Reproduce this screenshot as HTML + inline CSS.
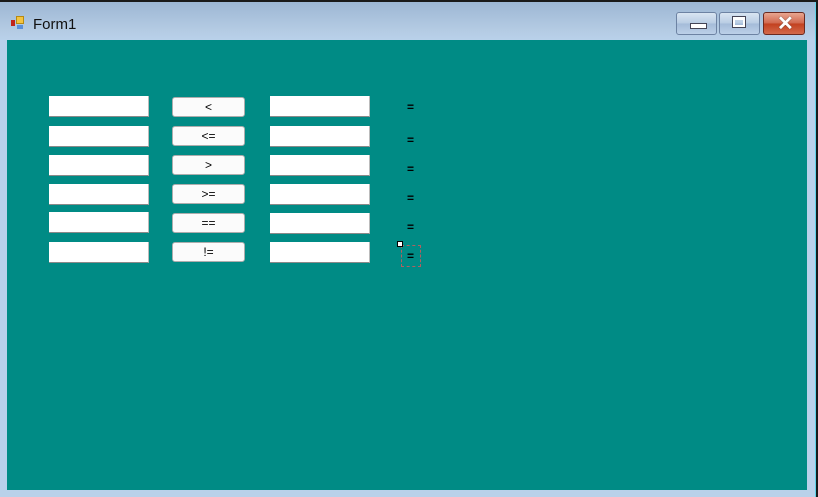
<!DOCTYPE html>
<html><head><style>
body{margin:0;width:818px;height:497px;overflow:hidden;background:#1a1a1a;font-family:"Liberation Sans",sans-serif}
#win{position:absolute;left:0;top:2px;width:815px;height:495px;background:linear-gradient(#9db7d4 0,#b4cbe3 28px,#b9d1ea 38px);border-right:1px solid #5fd3e8}
#client{position:absolute;left:7px;top:38px;width:800px;height:450px;background:#008b85}
.tb{position:absolute;width:100px;height:21px;background:#fff;border-bottom:1px solid #8a8a8a;border-right:1px solid #bbb;box-sizing:border-box}
.bt{position:absolute;left:172px;width:73px;height:20px;background:#fbfbfb;border:1px solid #adadad;border-radius:3px;box-sizing:border-box;font-size:12px;text-align:center;line-height:18px;color:#000}
.lb{position:absolute;left:407px;font-size:12px;font-weight:bold}
.cb{position:absolute;top:10px;height:23px;border:1px solid #6d83a3;border-radius:3px;box-sizing:border-box;background:linear-gradient(#d9e5f2 0,#b8cce3 50%,#a4bbd8 51%,#bcd0e8 100%)}
</style></head><body>
<div id="win">
 <div style="position:absolute;left:11px;top:14px;width:14px;height:14px">
  <div style="position:absolute;left:0;top:4px;width:4px;height:6px;background:#c0241a"></div>
  <div style="position:absolute;left:5px;top:0;width:8px;height:8px;background:#f4c440;border:1px solid #b88a10;box-sizing:border-box"></div>
  <div style="position:absolute;left:6px;top:9px;width:6px;height:4px;background:#5b8fd8"></div>
 </div>
 <div style="position:absolute;left:33px;top:14px;font-size:15px;color:#111">Form1</div>
 <div class="cb" style="left:676px;width:41px"><div style="position:absolute;left:13px;top:10px;width:15px;height:4px;background:#fff;border:1px solid #445"></div></div>
 <div class="cb" style="left:719px;width:41px"><div style="position:absolute;left:13px;top:4px;width:12px;height:10px;border:2px solid #fff;outline:1px solid #445;box-sizing:border-box;border-top-width:3px"></div></div>
 <div class="cb" style="left:763px;width:42px;border-color:#6b2a20;background:linear-gradient(#e8a690 0,#d0664c 50%,#c2401f 51%,#d3694a 100%)"><div style="position:absolute;left:13px;top:-2px;font-size:20px;font-weight:bold;color:#fff;text-shadow:0 0 1px #333">✕</div></div>
 <div id="client"></div>
</div>
<div class="tb" style="left:49px;top:96px"></div><div class="tb" style="left:270px;top:96px"></div>
<div class="tb" style="left:49px;top:126px"></div><div class="tb" style="left:270px;top:126px"></div>
<div class="tb" style="left:49px;top:155px"></div><div class="tb" style="left:270px;top:155px"></div>
<div class="tb" style="left:49px;top:184px"></div><div class="tb" style="left:270px;top:184px"></div>
<div class="tb" style="left:49px;top:212px"></div><div class="tb" style="left:270px;top:213px"></div>
<div class="tb" style="left:49px;top:242px"></div><div class="tb" style="left:270px;top:242px"></div>
<div class="bt" style="top:97px">&lt;</div>
<div class="bt" style="top:126px">&lt;=</div>
<div class="bt" style="top:155px">&gt;</div>
<div class="bt" style="top:184px">&gt;=</div>
<div class="bt" style="top:213px">==</div>
<div class="bt" style="top:242px">!=</div>
<div class="lb" style="top:100px">=</div>
<div class="lb" style="top:133px">=</div>
<div class="lb" style="top:162px">=</div>
<div class="lb" style="top:191px">=</div>
<div class="lb" style="top:220px">=</div>
<div class="lb" style="top:249px">=</div>
<div style="position:absolute;left:401px;top:245px;width:20px;height:22px;border:1px dashed #b06060;box-sizing:border-box"></div>
<div style="position:absolute;left:397px;top:241px;width:6px;height:6px;background:#fff;border:1px solid #000;box-sizing:border-box"></div>
</body></html>
